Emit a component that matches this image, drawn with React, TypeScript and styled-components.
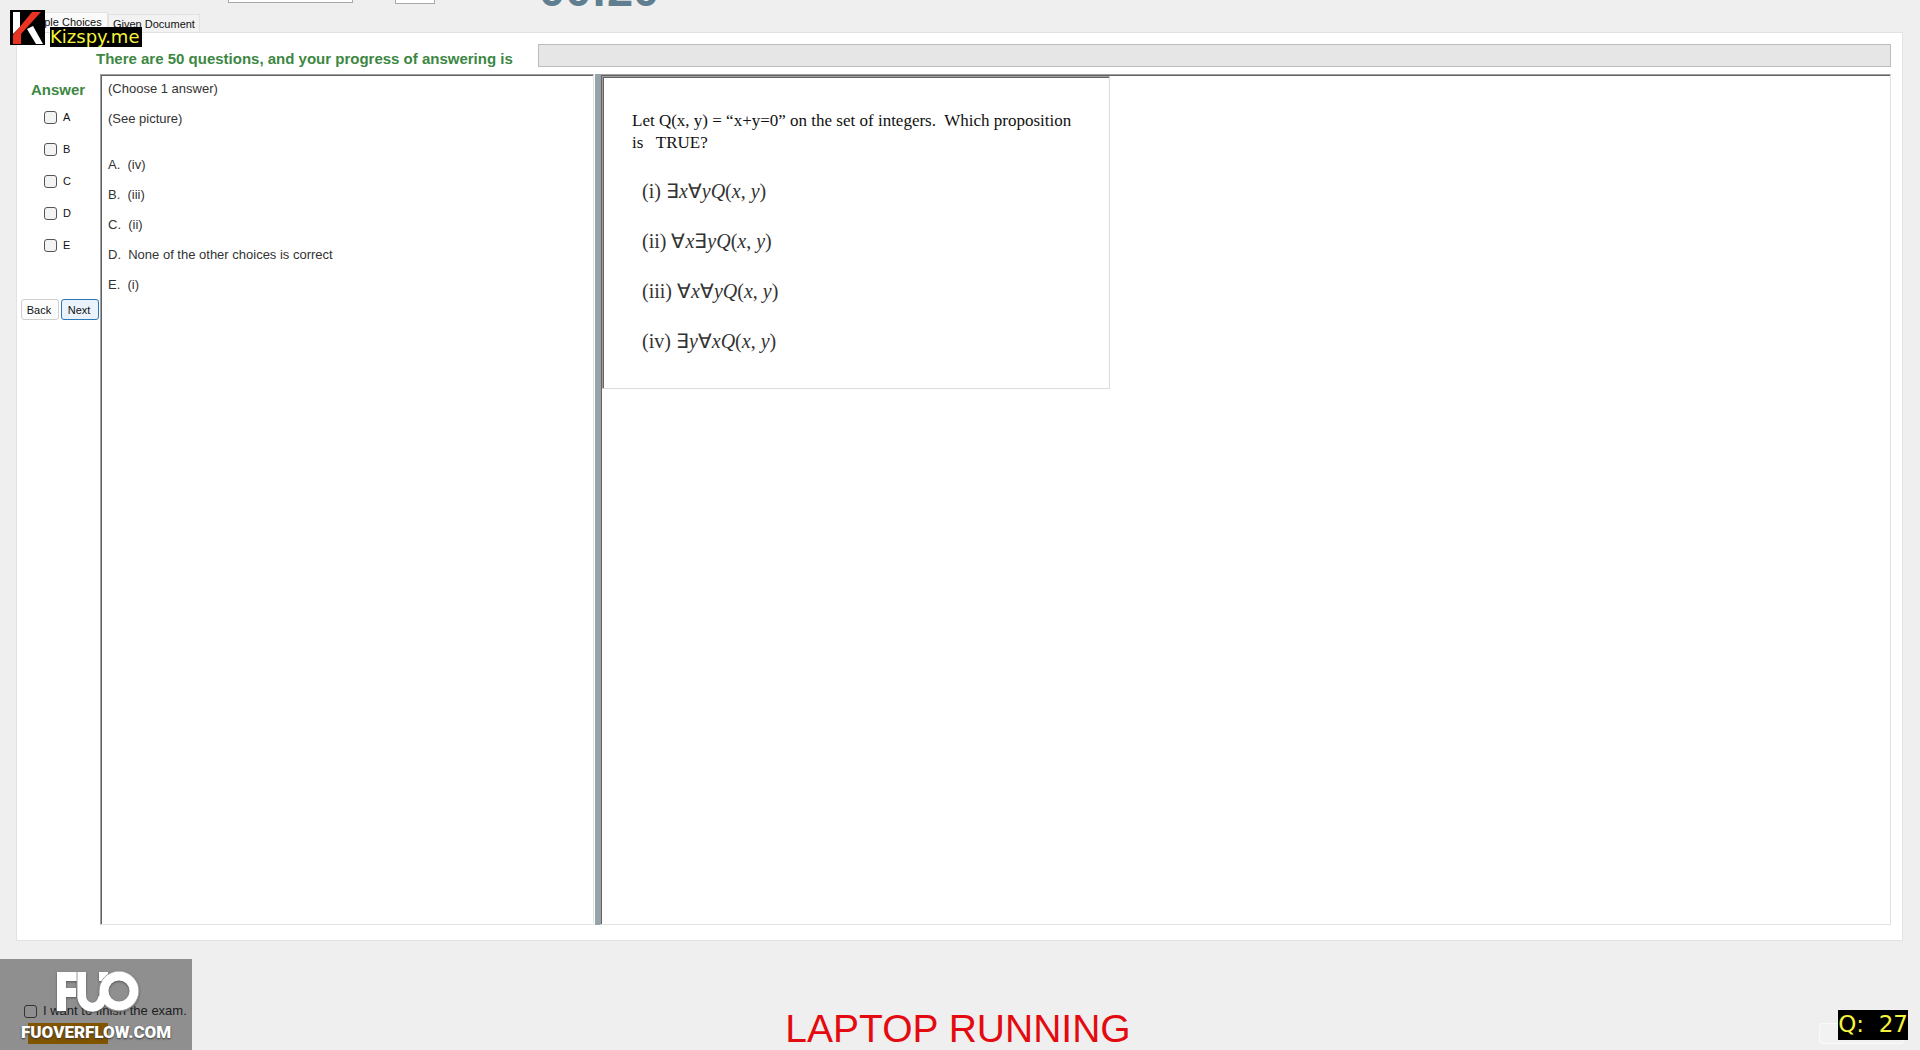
import React from 'react';
import styled, { createGlobalStyle } from 'styled-components';

const Global = createGlobalStyle`
  * { box-sizing: border-box; }
  body { margin: 0; background: #efefef; font-family: "Liberation Sans", Arial, sans-serif; }
  p, h1 { margin: 0; }
`;

const Page = styled.div`
  position: relative;
  display: flex;
  flex-direction: column;
  min-height: 100vh;
  overflow: hidden;
`;

const TopBar = styled.header`
  position: relative;
  height: 32px;
  padding-left: 17px;
  display: flex;
  align-items: flex-end;
`;

const Tab = styled.button<{ $active?: boolean }>`
  height: ${(p) => (p.$active ? 20 : 18)}px;
  padding: ${(p) => (p.$active ? '0 7px 0 3px' : '2px 4px 0')};
  border: 1px solid #e2e2e2;
  border-bottom: 0;
  background: ${(p) => (p.$active ? '#fafafa' : '#f2f2f2')};
  font: 11px/15px "Liberation Sans", Arial, sans-serif;
  color: #111;
  white-space: nowrap;
`;

const ActiveTab = styled(Tab)`
  width: 91px;
  text-align: right;
`;

const CutControls = styled.div`
  position: absolute;
  left: 228px;
  bottom: 28px;
  display: flex;
  align-items: flex-end;
`;

const FontSelect = styled.select`
  width: 125px;
  height: 22px;
  margin: 0 42px 1px 0;
  border: 1px solid #a8a8a8;
  background: #fff;
`;

const SizeInput = styled.input`
  width: 40px;
  height: 22px;
  border: 1px solid #a8a8a8;
  background: #fff;
`;

const Timer = styled.output`
  position: absolute;
  left: 539px;
  bottom: 16px;
  font-size: 47px;
  line-height: 52px;
  font-weight: bold;
  color: #5f7f90;
`;

const Panel = styled.main`
  flex: 1;
  display: flex;
  flex-direction: column;
  margin: 0 17px 0 16px;
  padding: 11px 11px 15px 3px;
  border: 1px solid #e2e2e2;
  background: #fff;
`;

const ProgressRow = styled.div`
  display: flex;
  height: 30px;
  padding-left: 76px;
`;

const GreenLabel = styled.label`
  width: 442px;
  padding-top: 6px;
  font-size: 15px;
  line-height: 18px;
  font-weight: bold;
  color: #3c8742;
  white-space: nowrap;
`;

const ProgressTrack = styled.div`
  flex: 1;
  height: 23px;
  border: 1px solid #bcbcbc;
  background: #e6e6e6;
`;

const Workspace = styled.div`
  flex: 1;
  display: grid;
  grid-template-columns: 80px 495px 5px 1fr;
`;

const AnswerColumn = styled.aside`
  display: flex;
  flex-direction: column;
`;

const AnswerTitle = styled.h1`
  padding: 7px 0 10px 11px;
  font-size: 15px;
  line-height: 18px;
  font-weight: bold;
  color: #3c8742;
`;

const Choice = styled.label`
  display: flex;
  align-items: center;
  gap: 6px;
  height: 32px;
  padding-left: 24px;
  padding-bottom: 16px;
  font-size: 11px;
  line-height: 16px;
  color: #111;
`;

const Check = styled.input<{ $bg?: string }>`
  appearance: none;
  width: 13px;
  height: 13px;
  margin: 0;
  border: 1px solid #555;
  border-radius: 3px;
  background: ${(p) => p.$bg || '#f3f3f3'};
`;

const NavButtons = styled.div`
  display: flex;
  gap: 2px;
  padding: 30px 0 0 1px;
`;

const NavButton = styled.button<{ $focused?: boolean }>`
  width: 38px;
  height: 21px;
  padding: 0 2px 0 0;
  border: 1px solid ${(p) => (p.$focused ? '#2a78b5' : '#cfcfcf')};
  border-radius: 3px;
  background: ${(p) => (p.$focused ? '#eaf3fb' : '#fdfdfd')};
  font: 11px/16px "Liberation Sans", Arial, sans-serif;
  color: #111;
`;

const Pane = styled.section`
  padding: 1px 0 0 1px;
  border: 1px solid #dfe3e3;
  border-top-color: #a0a0a0;
  border-left-color: #a0a0a0;
  background: #fff;
  box-shadow: inset 1px 1px #646264;
`;

const Question = styled(Pane)`
  margin-right: 1px;
  padding: 6px 7px;
  font-size: 13px;
  line-height: 16px;
  color: #333;
  p { margin-bottom: 14px; white-space: pre; }
  p:nth-child(2) { margin-bottom: 30px; }
`;

const Splitter = styled.div`
  background: #97a3ab;
`;

const Picture = styled.figure`
  width: 508px;
  height: 313px;
  margin: 0;
  padding: 33px 29px;
  border: 1px solid #dcdcdc;
  border-top-color: #a0a0a0;
  border-left-color: #a0a0a0;
  box-shadow: inset 1px 1px #646264;
  font-family: "Liberation Serif", "Times New Roman", serif;
  font-size: 17px;
  line-height: 22px;
  color: #111;
  p { white-space: pre; }
`;

const Formulas = styled.div`
  display: flex;
  flex-direction: column;
  gap: 28px;
  padding: 26px 0 0 10px;
  font-size: 20px;
  color: #333;
`;

const Footer = styled.footer`
  position: relative;
  height: 109px;
  display: flex;
  justify-content: center;
  padding-top: 68px;
`;

const FinishLabel = styled.label`
  position: absolute;
  left: 24px;
  top: 61px;
  display: flex;
  align-items: center;
  gap: 6px;
  font-size: 13px;
  line-height: 18px;
  color: #333;
`;

const FinishButton = styled.button`
  position: absolute;
  left: 28px;
  top: 82px;
  width: 80px;
  height: 21px;
  border: 0;
  background: #d88c00;
`;

const Running = styled.p`
  padding-right: 4px;
  font-size: 39px;
  line-height: 40px;
  color: #e30b0f;
`;

const Watermark = styled.div`
  position: absolute;
  left: 0;
  bottom: 0;
  width: 192px;
  height: 91px;
  background: rgba(0, 0, 0, 0.4);
`;

const Mark = styled.svg`
  position: absolute;
  left: 55px;
  top: 10px;
  filter: drop-shadow(0 1px 1px #555);
`;

const Site = styled.span`
  position: absolute;
  left: 21px;
  top: 61px;
  font: 900 17px/24px Roboto, "Liberation Sans", sans-serif;
  color: #fff;
  text-shadow: 0 1px 2px #333;
`;

const GhostButton = styled.button`
  position: absolute;
  right: 16px;
  bottom: 6px;
  width: 85px;
  height: 21px;
  border: 1px solid #fafafa;
  border-radius: 3px;
  background: #f2f2f2;
`;

const Counter = styled.output`
  position: absolute;
  right: 12px;
  bottom: 10px;
  height: 30px;
  background: #000;
  color: #f4f43c;
  font: 23px/28px "DejaVu Sans", sans-serif;
  white-space: pre;
`;

const Brand = styled.div`
  position: absolute;
  left: 10px;
  top: 10px;
  display: flex;
`;

const BrandName = styled.span`
  width: 92px;
  height: 20px;
  margin: 17px 0 0 5px;
  background: #000;
  color: #f4f43c;
  font: 18px/20px "DejaVu Sans", sans-serif;
`;

const choices = ['A', 'B', 'C', 'D', 'E'];
const lines = ['(Choose 1 answer)', '(See picture)', 'A.  (iv)', 'B.  (iii)', 'C.  (ii)', 'D.  None of the other choices is correct', 'E.  (i)'];

export default function App() {
  return (
    <Page>
      <Global />
      <TopBar>
        <ActiveTab $active>Multiple Choices</ActiveTab>
        <Tab>Given Document</Tab>
        <CutControls>
          <FontSelect aria-label="Font" />
          <SizeInput aria-label="Size" />
        </CutControls>
        <Timer>00:20</Timer>
      </TopBar>
      <Panel>
        <ProgressRow>
          <GreenLabel id="progress">There are 50 questions, and your progress of answering is</GreenLabel>
          <ProgressTrack role="progressbar" aria-labelledby="progress" aria-valuenow={0} />
        </ProgressRow>
        <Workspace>
          <AnswerColumn>
            <AnswerTitle>Answer</AnswerTitle>
            {choices.map((c) => (
              <Choice key={c}><Check type="checkbox" />{c}</Choice>
            ))}
            <NavButtons>
              <NavButton>Back</NavButton>
              <NavButton $focused>Next</NavButton>
            </NavButtons>
          </AnswerColumn>
          <Question>{lines.map((l) => <p key={l}>{l}</p>)}</Question>
          <Splitter />
          <Pane>
            <Picture>
              <p>Let Q(x, y) = “x+y=0” on the set of integers.  Which proposition</p>
              <p>is   TRUE?</p>
              <Formulas>
                <p>(i) ∃<i>x</i>∀<i>yQ</i>(<i>x</i>, <i>y</i>)</p>
                <p>(ii) ∀<i>x</i>∃<i>yQ</i>(<i>x</i>, <i>y</i>)</p>
                <p>(iii) ∀<i>x</i>∀<i>yQ</i>(<i>x</i>, <i>y</i>)</p>
                <p>(iv) ∃<i>y</i>∀<i>xQ</i>(<i>x</i>, <i>y</i>)</p>
              </Formulas>
            </Picture>
          </Pane>
        </Workspace>
      </Panel>
      <Footer>
        <FinishButton aria-label="Finish" />
        <FinishLabel><Check type="checkbox" $bg="transparent" />I want to finish the exam.</FinishLabel>
        <Running>LAPTOP RUNNING</Running>
        <Watermark>
          <Mark width="86" height="44" viewBox="0 0 86 44" fill="none" stroke="#fff" strokeWidth="9">
            <path d="M6.5 42V7.5H22M6.5 23.5H21" />
            <path d="M26.5 3V25C26.5 41 45 43 48 28" />
            <path d="M48.500 3V12" />
            <path d="M22 3V27" stroke="#999" strokeWidth="1" />
            <circle cx="64" cy="22" r="20" stroke="#999" strokeWidth="1" />
            <circle cx="64" cy="22" r="15" />
            <path d="M49 21C49 30 46 36 39 38" strokeWidth="8" />
          </Mark>
          <Site>FUOVERFLOW.COM</Site>
        </Watermark>
        <GhostButton aria-label="Exit" />
        <Counter>Q:  27</Counter>
      </Footer>
      <Brand>
        <svg width="35" height="35" viewBox="0 0 35 35">
          <rect width="35" height="35" />
          <path d="M3 2H10V17L3 24Z" fill="#fff" />
          <path d="M17 19L23 16L33 34H26Z" fill="#fff" />
          <path d="M22 2H31L11 24V34H3V25Z" fill="#e93323" />
        </svg>
        <BrandName>Kizspy.me</BrandName>
      </Brand>
    </Page>
  );
}
